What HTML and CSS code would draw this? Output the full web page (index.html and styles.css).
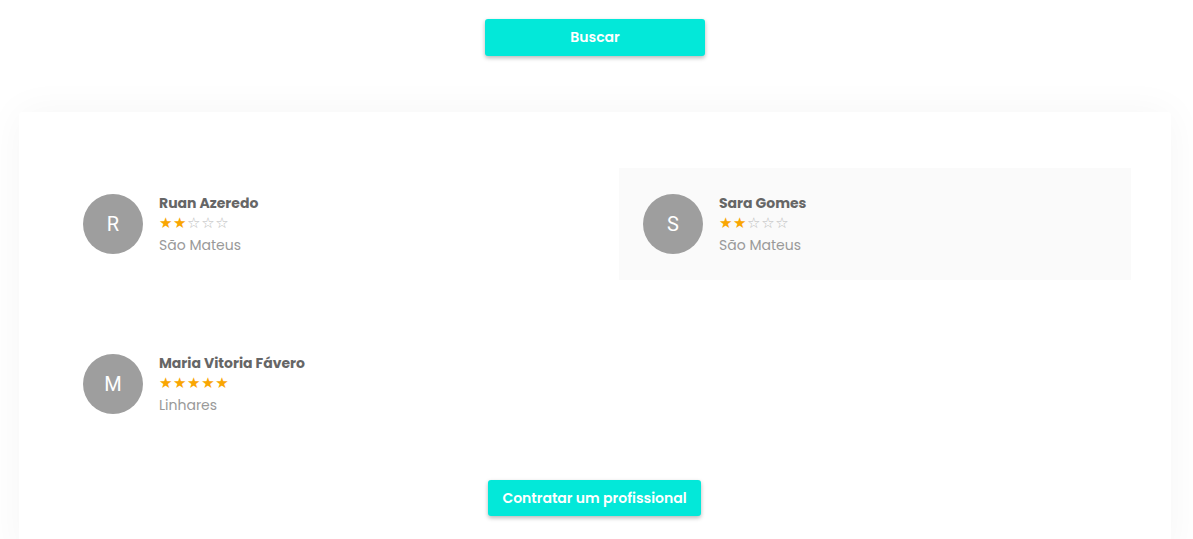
FILE: index.html
```html
<!DOCTYPE html>
<html lang="pt">
<head>
<meta charset="utf-8">
<link rel="stylesheet" href="styles.css">
</head>
<body>
<div class="search">
  <button class="btn btn-search">Buscar</button>
</div>
<section class="card">
  <div class="grid">
    <div class="item">
      <div class="avatar">R</div>
      <div class="info">
        <div class="name">Ruan Azeredo</div>
        <div class="stars"><span class="on">★★</span><span class="off">☆☆☆</span></div>
        <div class="city">São Mateus</div>
      </div>
    </div>
    <div class="item item-alt">
      <div class="avatar">S</div>
      <div class="info">
        <div class="name">Sara Gomes</div>
        <div class="stars"><span class="on">★★</span><span class="off">☆☆☆</span></div>
        <div class="city">São Mateus</div>
      </div>
    </div>
    <div class="item">
      <div class="avatar">M</div>
      <div class="info">
        <div class="name">Maria Vitoria Fávero</div>
        <div class="stars"><span class="on">★★★★★</span></div>
        <div class="city">Linhares</div>
      </div>
    </div>
  </div>
  <div class="actions">
    <button class="btn btn-hire">Contratar um profissional</button>
  </div>
</section>
</body>
</html>
```
FILE: styles.css
```css
* { box-sizing: border-box; }
body {
  margin: 0;
  background: #fff;
  font-family: "Poppins", "Open Sans", "Liberation Sans", sans-serif;
}
.search {
  display: flex;
  justify-content: center;
  padding-top: 19px;
  padding-right: 3px;
}
.btn {
  border: none;
  background: #03e8d9;
  color: #fff;
  font-family: inherit;
  font-weight: 600;
  font-size: 14px;
  border-radius: 3px;
  box-shadow: 0 2px 4px rgba(0,0,0,0.28);
  cursor: pointer;
}
.btn-search {
  width: 220px;
  height: 37px;
}
.card {
  margin: 56px 22px 0 19px;
  background: #fff;
  border-radius: 3px;
  box-shadow: 0 0 40px rgba(0,0,0,0.045);
  padding: 56px 40px 40px 40px;
}
.grid {
  display: grid;
  grid-template-columns: 512px 512px;
  column-gap: 48px;
  row-gap: 48px;
}
.item {
  height: 112px;
  display: flex;
  align-items: center;
  padding-left: 24px;
  gap: 16px;
}
.item-alt { background: #fafafa; }
.avatar {
  width: 60px;
  height: 60px;
  border-radius: 50%;
  background: #9e9e9e;
  color: #fff;
  font-family: Roboto, sans-serif;
  font-size: 20px;
  display: flex;
  align-items: center;
  justify-content: center;
  flex: none;
}
.info { display: flex; flex-direction: column; }
.name {
  font-size: 14px;
  font-weight: 700;
  color: #666;
  line-height: 20px;
}
.stars {
  font-family: "DejaVu Sans", sans-serif;
  font-size: 15px;
  line-height: 21px;
  letter-spacing: 0.6px;
}
.stars .on { color: #f9a602; }
.stars .off { color: #bbb; }
.city {
  font-size: 14px;
  color: #999;
  line-height: 22px;
}
.actions {
  display: flex;
  justify-content: center;
  padding-top: 40px;
  padding-right: 1px;
}
.btn-hire {
  width: 213px;
  height: 36px;
}
```
